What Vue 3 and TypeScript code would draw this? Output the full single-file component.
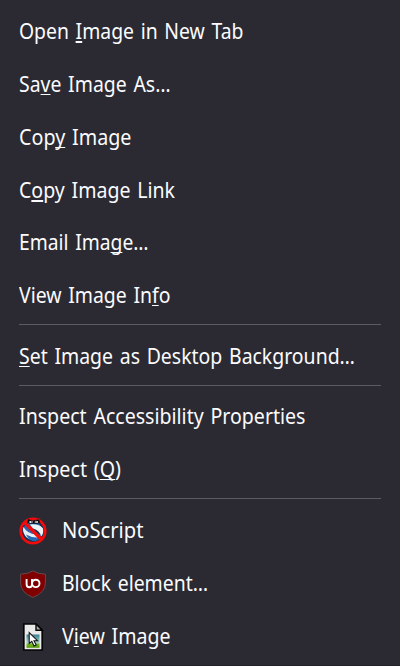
<script setup lang="ts">
import { onMounted, ref } from 'vue'

type Icon = 'noscript' | 'shield' | 'page'

interface Item {
  before: string
  key?: string
  after?: string
  width: number
  icon?: Icon
  thick?: boolean
}

const groups: Item[][] = [
  [
    { before: 'Open ', key: 'I', after: 'mage in New Tab', width: 224.5, thick: true },
    { before: 'Sa', key: 'v', after: 'e Image As…', width: 151.5 },
    { before: 'Cop', key: 'y', after: ' Image', width: 112.5 },
    { before: 'C', key: 'o', after: 'py Image Link', width: 156, thick: true },
    { before: 'Email Ima', key: 'g', after: 'e…', width: 129.5 },
    { before: 'View Image In', key: 'f', after: 'o', width: 151.5 },
  ],
  [{ before: '', key: 'S', after: 'et Image as Desktop Background…', width: 336 }],
  [
    { before: 'Inspect Accessibility Properties', width: 286.5 },
    { before: 'Inspect (', key: 'Q', after: ')', width: 102 },
  ],
  [
    { before: 'NoScript', width: 81.5, icon: 'noscript' },
    { before: 'Block element…', width: 146, icon: 'shield' },
    { before: 'V', key: 'i', after: 'ew Image', width: 108.5, icon: 'page' },
  ],
]

const menu = ref<HTMLElement | null>(null)

// Condenses every label so that it occupies its intended width.
onMounted(() => {
  menu.value?.querySelectorAll<HTMLElement>('.label').forEach((el) => {
    const natural = el.getBoundingClientRect().width
    el.style.transform = `scaleX(${Number(el.dataset.width) / natural})`
  })
})
</script>

<template>
  <div ref="menu" class="menu" role="menu">
    <div v-for="(group, g) in groups" :key="g" class="group">
      <div v-for="(item, i) in group" :key="i" class="item" role="menuitem">
        <span v-if="item.icon" class="icon">
          <svg v-if="item.icon === 'noscript'" width="28" height="28" viewBox="0 0.5 28 28">
            <circle cx="14" cy="14.5" r="11.5" fill="#15324f" />
            <path d="M4 12C6 7 12 5 20 7L22 11C16 9 12 11 14 14L22 19L19 24C11 24 4 20 4 12Z" fill="#2868b0" />
            <path d="M4.5 10.5Q8 17 17 18Q21 20 16 23Q9 24 6 19Q3 14 4.5 10.5Z" fill="#e9f0f4" />
            <path d="M11 8Q20 7 24 12Q25 17 22 20Q21 14 14 12Z" fill="#eef3f6" />
            <path d="M7 18Q12 21 18 21L17 25Q10 25 7 18Z" fill="#246bb8" />
            <circle cx="14" cy="14.5" r="12.2" fill="none" stroke="#f40b0b" stroke-width="2.8" />
            <path d="M5.5 6L22.5 23" stroke="#f40b0b" stroke-width="3.2" />
            <path d="M9 2.2L14 4.5L19.5 2.2L21 5.5Q19 8.2 15 7Q11 8.2 8.5 5.5Z" fill="#050b12" />
            <ellipse cx="12" cy="5.5" rx="1.8" ry="1.1" fill="#fff" />
            <ellipse cx="17.4" cy="5.5" rx="1.8" ry="1.1" fill="#fff" />
            <circle cx="12.6" cy="5.4" r=".7" fill="#111" />
            <circle cx="17" cy="5.4" r=".7" fill="#111" />
            <path d="M9 2L13.5 3.8M20.5 2L16 3.8" stroke="#c80b0b" stroke-width="1.2" />
          </svg>
          <svg v-else-if="item.icon === 'shield'" width="28" height="28" viewBox="0 0 28 28">
            <path d="M14 .8Q18.5 4 26.4 4.2V13Q26.4 22.5 14 27.4Q1.6 22.5 1.6 13V4.2Q9.5 4 14 .8Z" fill="#800000" stroke="#69464d" stroke-width="1" />
            <path d="M7.6 9V14.2Q7.6 17.2 10.4 17.2Q13 17.2 13 14.2V9" fill="none" stroke="#fff" stroke-width="1.9" />
            <circle cx="16.8" cy="13.4" r="3.7" fill="none" stroke="#fff" stroke-width="1.9" />
          </svg>
          <svg v-else width="28" height="28" viewBox="0 0 28 28">
            <defs>
              <linearGradient id="sky" x1="0" y1="0" x2="0" y2="1">
                <stop offset="0" stop-color="#387e94" />
                <stop offset=".65" stop-color="#a9d5cd" />
                <stop offset=".7" stop-color="#79bd25" />
                <stop offset="1" stop-color="#55970c" />
              </linearGradient>
            </defs>
            <path d="M4.8 1H17L23.2 7.2V27H4.8Z" fill="#e9e9e9" stroke="#050505" stroke-width="1.7" />
            <path d="M17 1V7.2H23.2Z" fill="#aaa" stroke="#050505" stroke-width="1.4" />
            <path d="M7.5 11.5H20.5V24.8H7.5Z" fill="url(#sky)" />
            <path d="M10.2 9.5V20.5L12.8 18.3L15 23L17.2 22L15 17.7H18.5Z" fill="#fff" stroke="#151515" stroke-width="1.1" />
          </svg>
        </span>
        <span class="label" :data-width="item.width">{{ item.before }}<span v-if="item.key" class="key" :class="{ thick: item.thick }">{{ item.key }}</span>{{ item.after }}</span>
      </div>
    </div>
  </div>
</template>

<style>
body {
  background: #2b2a33;
}
</style>

<style scoped>
.menu {
  box-sizing: border-box;
  width: 400px;
  height: 666px;
  padding: 5px 19px 0;
  overflow: hidden;
  background: #2b2a33;
  border-bottom: 1px solid #222129;
  color: #fbfbfe;
  font-family: 'Noto Sans', 'Open Sans', sans-serif;
  font-size: 21px;
  line-height: 29px;
}

.group + .group {
  margin-top: 2px;
  padding-top: 5px;
  border-top: 1px solid #5b5a65;
}

.group:nth-child(3) {
  padding-top: 4px;
}

.item {
  display: flex;
  align-items: center;
  height: 53px;
}

.item:nth-child(5) {
  margin-top: -1px;
}

.icon {
  display: flex;
  width: 28px;
  height: 28px;
  margin-right: 14.5px;
}

.label {
  white-space: pre;
  word-spacing: 1.8px;
  transform-origin: left center;
}

.key {
  text-decoration: underline;
  text-decoration-thickness: 1px;
  text-decoration-skip-ink: none;
  text-underline-offset: 2px;
}

.key.thick {
  text-decoration-thickness: 2px;
}
</style>
